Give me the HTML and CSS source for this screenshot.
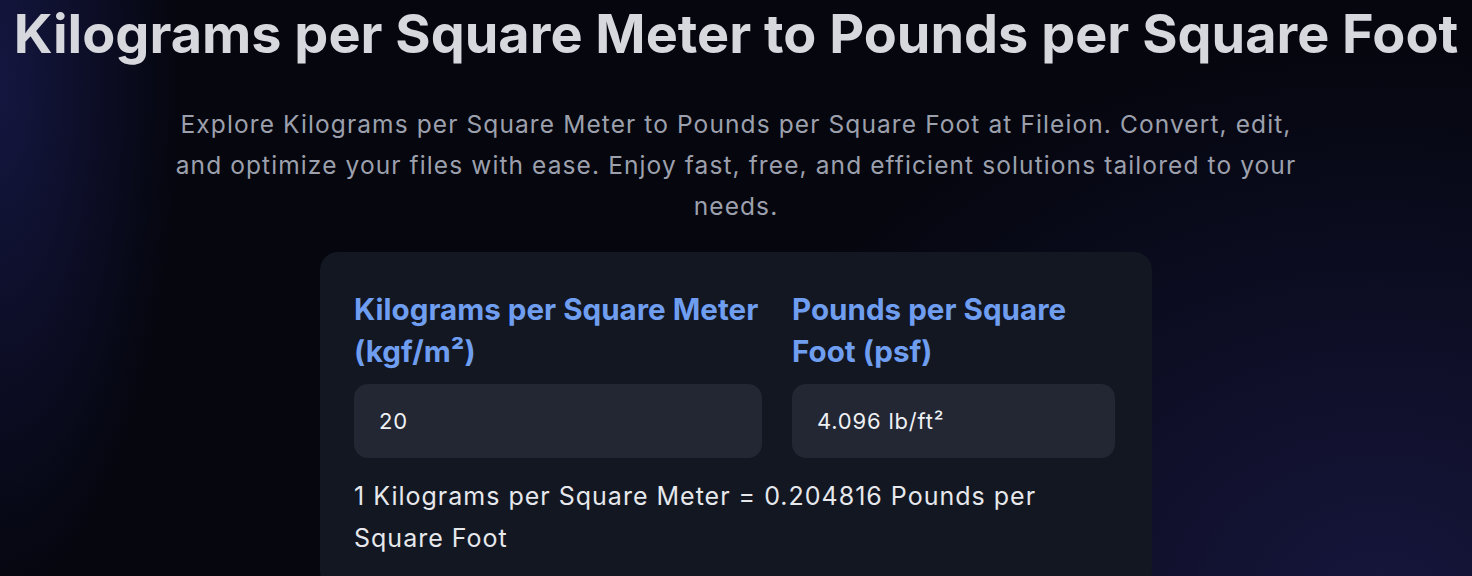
FILE: index.html
```html
<!DOCTYPE html>
<html lang="en">
<head>
  <meta charset="UTF-8">
  <meta name="viewport" content="width=device-width, initial-scale=1.0">
  <title>Kilograms per Square Meter to Pounds per Square Foot</title>
  <link rel="stylesheet" href="styles.css">
</head>
<body>
  <div class="page">
    <h1 class="title">Kilograms per Square Meter to Pounds per Square Foot</h1>
    <p class="intro">Explore Kilograms per Square Meter to Pounds per Square Foot at Fileion. Convert, edit, and optimize your files with ease. Enjoy fast, free, and efficient solutions tailored to your needs.</p>

    <div class="card">
      <div class="fields">
        <div class="field">
          <label class="label" for="from">Kilograms per Square Meter (kgf/m²)</label>
          <input class="box" id="from" type="text" value="20">
        </div>
        <div class="field">
          <label class="label" for="to">Pounds per Square Foot (psf)</label>
          <div class="box" id="to">4.096 lb/ft²</div>
        </div>
      </div>
      <p class="rate">1 Kilograms per Square Meter = 0.204816 Pounds per Square Foot</p>
    </div>
  </div>
</body>
</html>
```

FILE: styles.css
```css
* {
  box-sizing: border-box;
}
html, body {
  margin: 0;
  height: 100%;
}
body {
  font-family: Inter, "Noto Sans", sans-serif;
  background-color: #05060e;
  background-image:
    radial-gradient(ellipse 700px 560px at 1380px 600px, rgba(26, 26, 72, .8), rgba(26, 26, 72, 0) 100%),
    radial-gradient(ellipse 180px 520px at 0 80px, rgba(22, 24, 70, .9), rgba(22, 24, 70, 0) 100%);
  overflow: hidden;
}
.page {
  display: flex;
  flex-direction: column;
  align-items: center;
}
.title {
  margin: 0;
  padding-top: 2px;
  font-size: 54px;
  line-height: 64px;
  font-weight: 700;
  color: #d6d8de;
  text-align: center;
  white-space: nowrap;
}
.intro {
  margin: 38px 0 0;
  max-width: 1130px;
  font-size: 24.5px;
  line-height: 41px;
  letter-spacing: 1.1px;
  color: #9ca0ad;
  text-align: center;
}
.card {
  margin-top: 25px;
  width: 832px;
  padding: 36px 37px 30px 34px;
  background: #121722;
  border-radius: 18px;
}
.fields {
  display: grid;
  grid-template-columns: 408px 1fr;
  gap: 30px;
}
.field {
  display: flex;
  flex-direction: column;
}
.label {
  font-size: 29.6px;
  line-height: 42px;
  font-weight: 700;
  color: #6f9ef0;
  flex: 1;
}
.box {
  margin-top: 12px;
  height: 74px;
  padding: 0 25px;
  border: 0;
  border-radius: 14px;
  background: #222733;
  color: #eef0f4;
  font-family: inherit;
  font-size: 22px;
  letter-spacing: 0.8px;
  line-height: 74px;
  outline: none;
  width: 100%;
}
.rate {
  margin: 17px 0 0;
  font-size: 25px;
  line-height: 42px;
  letter-spacing: 1px;
  color: #e6e8ec;
}
```
